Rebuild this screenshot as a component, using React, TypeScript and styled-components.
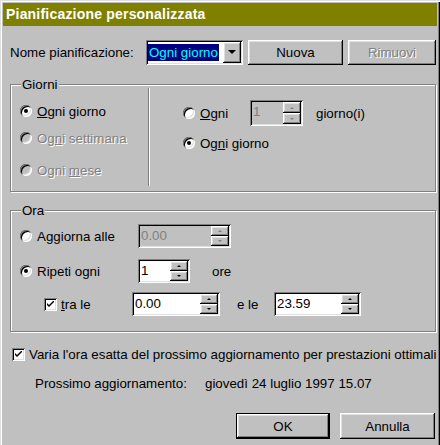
import React from "react";
import styled, { createGlobalStyle, css } from "styled-components";

const GlobalStyle = createGlobalStyle`
  html, body {
    margin: 0;
    padding: 0;
    background: #c0c0c0;
  }
  body {
    font-family: "Liberation Sans", Arial, sans-serif;
    font-size: 13.33px;
    color: #000;
  }
  * {
    box-sizing: border-box;
  }
`;

const raised = css`
  box-shadow: inset -1px -1px #000, inset 1px 1px #fff, inset -2px -2px #808080,
    inset 2px 2px #dfdfdf;
`;

const sunken = css`
  box-shadow: inset 1px 1px #808080, inset -1px -1px #fff, inset 2px 2px #000,
    inset -2px -2px #dfdfdf;
`;

const disabledText = css`
  color: #808080;
  text-shadow: 1px 1px #fff;
`;

const Window = styled.div`
  width: 440px;
  height: 445px;
  padding: 3px 3px 0 3px;
  background: #c0c0c0;
  box-shadow: inset 1px 1px #dfdfdf, inset 2px 2px #fff, inset -1px 0 #000,
    inset -2px 0 #808080;
  overflow: hidden;
  display: flex;
  flex-direction: column;
`;

const TitleBar = styled.div`
  height: 23px;
  background: #808000;
  color: #fff;
  font-weight: bold;
  font-size: 14px;
  line-height: 23px;
  padding-left: 3px;
  letter-spacing: 0.2px;
  white-space: nowrap;
`;

const Content = styled.div`
  padding: 13px 1px 0 7px;
  display: flex;
  flex-direction: column;
`;

const Row = styled.div<{ $h?: number; $mt?: number; $pl?: number }>`
  display: flex;
  align-items: center;
  height: ${(p) => p.$h ?? 20}px;
  margin-top: ${(p) => p.$mt ?? 0}px;
  padding-left: ${(p) => p.$pl ?? 0}px;
  white-space: nowrap;
`;

const Text = styled.span<{ $w?: number; $ml?: number; $disabled?: boolean }>`
  display: inline-block;
  line-height: 15px;
  width: ${(p) => (p.$w ? `${p.$w}px` : "auto")};
  margin-left: ${(p) => p.$ml ?? 0}px;
  flex: none;
  ${(p) => p.$disabled && disabledText}
`;

const Key = styled.span`
  text-decoration: underline;
`;

const Button = styled.button<{ $w: number; $h?: number; $ml?: number; $default?: boolean }>`
  width: ${(p) => p.$w}px;
  height: ${(p) => p.$h ?? 25}px;
  margin-left: ${(p) => p.$ml ?? 0}px;
  padding: 0;
  border: none;
  background: #c0c0c0;
  font: inherit;
  color: #000;
  flex: none;
  ${raised}
  ${(p) =>
    p.$default &&
    css`
      box-shadow: inset 0 0 0 1px #000, inset -2px -2px #000, inset 2px 2px #fff,
        inset -3px -3px #808080, inset 3px 3px #dfdfdf;
    `}
  &:disabled {
    ${disabledText}
  }
`;

const Combo = styled.div`
  width: 97px;
  height: 25px;
  background: #fff;
  padding: 2px;
  display: flex;
  align-items: center;
  flex: none;
  ${sunken}
`;

const ComboValue = styled.span`
  width: 71px;
  height: 17px;
  line-height: 17px;
  background: #000080;
  color: #00ffff;
  padding-left: 1px;
  margin-right: 4px;
  overflow: hidden;
`;

const DropButton = styled.div`
  width: 18px;
  height: 100%;
  background: #c0c0c0;
  display: flex;
  align-items: center;
  justify-content: center;
  ${raised}
`;

const Arrow = styled.span<{ $dir: "up" | "down"; $size: number; $disabled?: boolean }>`
  width: 0;
  height: 0;
  border-left: ${(p) => p.$size}px solid transparent;
  border-right: ${(p) => p.$size}px solid transparent;
  ${(p) =>
    p.$dir === "up"
      ? css`
          border-bottom: ${p.$size}px solid ${p.$disabled ? "#808080" : "#000"};
        `
      : css`
          border-top: ${p.$size}px solid ${p.$disabled ? "#808080" : "#000"};
        `}
`;

const GroupBox = styled.div<{ $h: number; $mt: number }>`
  position: relative;
  height: ${(p) => p.$h}px;
  margin-top: ${(p) => p.$mt}px;
  border: 1px solid #808080;
  box-shadow: inset 1px 1px #fff, 1px 1px #fff;
`;

const GroupLabel = styled.span`
  position: absolute;
  top: -8px;
  left: 10px;
  padding: 0 1px;
  line-height: 15px;
  background: #c0c0c0;
`;

const GroupBody = styled.div`
  display: flex;
  height: 100%;
`;

const Column = styled.div<{ $w?: number; $pt: number; $pl: number }>`
  width: ${(p) => (p.$w ? `${p.$w}px` : "auto")};
  flex: ${(p) => (p.$w ? "none" : 1)};
  padding-top: ${(p) => p.$pt}px;
  padding-left: ${(p) => p.$pl}px;
  display: flex;
  flex-direction: column;
`;

const Divider = styled.div`
  width: 2px;
  margin: 3px 0 5px;
  border-left: 1px solid #808080;
  border-right: 1px solid #fff;
`;

const Option = styled.div<{ $w?: number; $gap?: number }>`
  display: flex;
  align-items: center;
  gap: ${(p) => p.$gap ?? 5}px;
  width: ${(p) => (p.$w ? `${p.$w}px` : "auto")};
  flex: none;
`;

const RadioCircle = styled.span<{ $checked?: boolean; $disabled?: boolean }>`
  width: 12px;
  height: 12px;
  border-radius: 50%;
  flex: none;
  display: flex;
  align-items: center;
  justify-content: center;
  background: ${(p) => (p.$disabled ? "#c0c0c0" : "#fff")};
  box-shadow: inset 1px 1px #808080, inset -1px -1px #fff, inset 2px 2px #000,
    inset -2px -2px #dfdfdf;
  &::after {
    content: "";
    display: ${(p) => (p.$checked ? "block" : "none")};
    width: 4px;
    height: 4px;
    border-radius: 50%;
    background: #000;
  }
`;

const CheckSquare = styled.span`
  width: 13px;
  height: 13px;
  flex: none;
  background: #fff;
  display: flex;
  align-items: center;
  justify-content: center;
  ${sunken}
`;

const SpinField = styled.div<{ $w: number; $h?: number; $ml?: number; $disabled?: boolean }>`
  width: ${(p) => p.$w}px;
  height: ${(p) => p.$h ?? 24}px;
  margin-left: ${(p) => p.$ml ?? 0}px;
  padding: 2px;
  flex: none;
  display: flex;
  background: ${(p) => (p.$disabled ? "#c0c0c0" : "#fff")};
  ${sunken}
`;

const SpinValue = styled.span<{ $disabled?: boolean }>`
  flex: 1;
  padding: 2px 0 0 1px;
  line-height: 15px;
  color: ${(p) => (p.$disabled ? "#808080" : "#000")};
`;

const SpinButtons = styled.div`
  width: 18px;
  display: flex;
  flex-direction: column;
`;

const SpinButton = styled.div`
  flex: 1;
  background: #c0c0c0;
  display: flex;
  align-items: center;
  justify-content: center;
  ${raised}
`;

const Footer = styled.div`
  display: flex;
  justify-content: flex-end;
  gap: 10px;
  margin-top: 20px;
  padding-right: 1px;
`;

type RadioProps = {
  checked?: boolean;
  disabled?: boolean;
  w?: number;
  children: React.ReactNode;
};

const Radio = ({ checked, disabled, w, children }: RadioProps) => (
  <Option $w={w}>
    <RadioCircle $checked={checked} $disabled={disabled} />
    <Text $disabled={disabled}>{children}</Text>
  </Option>
);

const Check = ({ w, children }: { w?: number; children: React.ReactNode }) => (
  <Option $w={w} $gap={4}>
    <CheckSquare>
      <svg width="7" height="7" viewBox="0 0 7 7">
        <path d="M0 2 L0 4 L2 6 L7 1 L7 -1 L2 4 Z" fill="#000" />
      </svg>
    </CheckSquare>
    <Text>{children}</Text>
  </Option>
);

type SpinProps = {
  value: string;
  w: number;
  h?: number;
  ml?: number;
  disabled?: boolean;
};

const Spin = ({ value, w, h, ml, disabled }: SpinProps) => (
  <SpinField $w={w} $h={h} $ml={ml} $disabled={disabled}>
    <SpinValue $disabled={disabled}>{value}</SpinValue>
    <SpinButtons>
      <SpinButton>
        <Arrow $dir="up" $size={2} $disabled={disabled} />
      </SpinButton>
      <SpinButton>
        <Arrow $dir="down" $size={2} $disabled={disabled} />
      </SpinButton>
    </SpinButtons>
  </SpinField>
);

export default function App() {
  return (
    <>
      <GlobalStyle />
      <Window>
        <TitleBar>Pianificazione personalizzata</TitleBar>
        <Content>
          <Row $h={26}>
            <Text $w={136}>Nome pianificazione:</Text>
            <Combo>
              <ComboValue>Ogni giorno</ComboValue>
              <DropButton>
                <Arrow $dir="down" $size={4} />
              </DropButton>
            </Combo>
            <Button $w={95} $ml={5}>
              Nuova
            </Button>
            <Button $w={88} $ml={5} disabled>
              Rimuovi
            </Button>
          </Row>

          <GroupBox $h={108} $mt={19}>
            <GroupLabel>Giorni</GroupLabel>
            <GroupBody>
              <Column $w={137} $pt={16} $pl={9}>
                <Row>
                  <Radio checked>
                    <Key>O</Key>gni giorno
                  </Radio>
                </Row>
                <Row $mt={7}>
                  <Radio disabled>
                    Og<Key>n</Key>i settimana
                  </Radio>
                </Row>
                <Row $mt={12}>
                  <Radio disabled>
                    Ogni <Key>m</Key>ese
                  </Radio>
                </Row>
              </Column>
              <Divider />
              <Column $pt={15} $pl={33}>
                <Row $h={26}>
                  <Radio w={67}>
                    <Key>O</Key>gni
                  </Radio>
                  <Spin value="1" w={53} h={26} disabled />
                  <Text $ml={13}>giorno(i)</Text>
                </Row>
                <Row $mt={7}>
                  <Radio checked>
                    Og<Key>n</Key>i giorno
                  </Radio>
                </Row>
              </Column>
            </GroupBody>
          </GroupBox>

          <GroupBox $h={122} $mt={18}>
            <GroupLabel>Ora</GroupLabel>
            <Column $pt={13} $pl={9}>
              <Row $h={24}>
                <Radio w={118}>Aggiorna alle</Radio>
                <Spin value="0.00" w={93} disabled />
              </Row>
              <Row $h={24} $mt={11}>
                <Radio w={118} checked>
                  Ripeti ogni
                </Radio>
                <Spin value="1" w={52} />
                <Text $ml={22}>ore</Text>
              </Row>
              <Row $h={24} $mt={9} $pl={24}>
                <Check w={88}>
                  <Key>t</Key>ra le
                </Check>
                <Spin value="0.00" w={88} />
                <Text $ml={17} $w={37}>
                  e le
                </Text>
                <Spin value="23.59" w={87} />
              </Row>
            </Column>
          </GroupBox>

          <Row $mt={12} $pl={2}>
            <Check>
              Varia l'ora esatta del prossimo aggiornamento per prestazioni ottimali
            </Check>
          </Row>
          <Row $mt={9} $pl={25}>
            <Text $w={170}>Prossimo aggiornamento:</Text>
            <Text>giovedì 24 luglio 1997 15.07</Text>
          </Row>

          <Footer>
            <Button $w={94} $h={26} $default>
              OK
            </Button>
            <Button $w={95} $h={26}>
              Annulla
            </Button>
          </Footer>
        </Content>
      </Window>
    </>
  );
}
